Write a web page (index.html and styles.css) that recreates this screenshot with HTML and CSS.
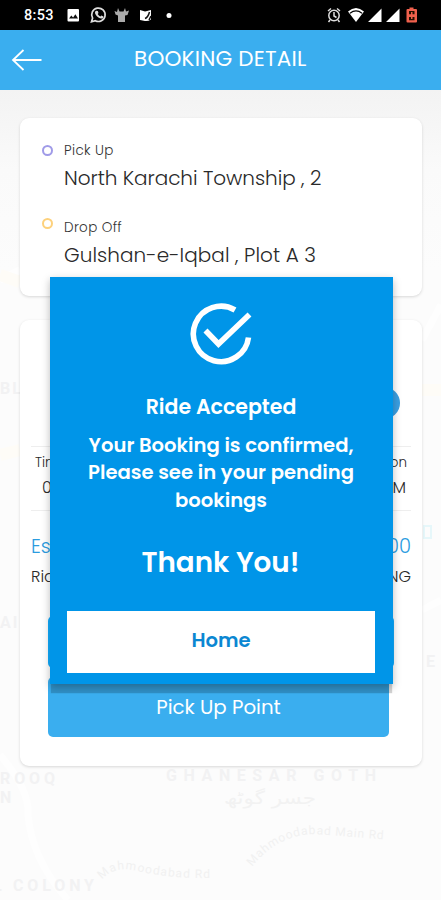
FILE: index.html
```html
<!DOCTYPE html>
<html lang="en">
<head>
<meta charset="utf-8">
<title>Booking Detail</title>
<link rel="stylesheet" href="styles.css">
</head>
<body>
<div class="screen">
  <div class="statusbar">
    <span class="clock">8:53</span>
    <svg class="status-icons" width="150" height="30" viewBox="0 0 150 30" aria-hidden="true">
      <path fill="#fff" d="M3.500 9h9.500a1 1 0 0 1 1 1v10.500a1 1 0 0 1-1 1H3.500a1 1 0 0 1-1-1V10a1 1 0 0 1 1-1z"/>
      <path fill="#111" d="M4 18.500l2.300-3 1.800 2 2.300-3.200 2.600 4.200z"/>
      <path fill="none" stroke="#ddd" stroke-width="1.700" d="M26.500 21.800l1.100-3.700a6.700 6.700 0 1 1 2.700 2.600z"/>
      <path fill="#ddd" d="M31.300 10.800l1.500.2.700 2-.8 1c.7 1.300 1.500 2 2.700 2.500l1-1 2 1c.1 1.500-1 2.200-2.200 2.100-3.200-.5-6.200-3.700-6.200-6 0-.8.500-1.500 1.300-1.800z"/>
      <path fill="#aaa" d="M49.500 11l2.500 1 1-4 1.500 3.500h4L60 8l1 3.500 3-1-1.500 4.500-2.500.5V22h-7v-6.500l-2.500-1z"/>
      <path fill="#fff" d="M75 10l5 1.500 6-1.500v9.500q-3 2-6 1.500l-5-1z"/>
      <path stroke="#111" stroke-width="1.500" fill="none" d="M80 18.500q3-1 4.500-6.500M84 20l2-4"/>
      <circle cx="104" cy="15.500" r="2.500" fill="#fff"/>
    </svg>
    <svg class="system-icons" width="96" height="30" viewBox="0 0 96 30" aria-hidden="true">
      <g fill="none" stroke="#ddd" stroke-width="1.500">
        <circle cx="9" cy="15.500" r="5.200"/>
        <path d="M9 12v4l2.500 1.500M3 11l3-2.500M15 11l-3-2.500M5 20l-1.500 2M13 20l1.500 2"/>
      </g>
      <path fill="#fff" d="M23 11.500q8-7 16 0L31 22z"/>
      <path fill="none" stroke="#000" stroke-width="1.200" d="M25 13.200q6-4.500 12 0"/>
      <path fill="#fff" d="M56.500 8.500V22H43zM74.500 8.500V22H61z"/>
      <path fill="#ef604d" d="M84.500 7.500h4V9H91q1 0 1 1v11.500q0 1-1 1h-8.500q-1 0-1-1V10q0-1 1-1h2z"/>
      <path fill="#210" d="M84 11h5.500v3.200H84zM84 17h5.500v3.200H84z"/>
      <path fill="#ef604d" d="M86 12h1.500v7H86z"/>
    </svg>
  </div>
  <div class="appbar">
    <svg class="back" width="32" height="24" viewBox="0 0 32 24" aria-hidden="true"><path d="M12.500 2L2 12l10.500 10M2 12h28.500"/></svg>
    <h1 class="title">BOOKING DETAIL</h1>
  </div>
  <div class="content">
    <svg class="map" width="441" height="810" viewBox="0 0 441 810" aria-hidden="true">
      <defs>
        <path id="road-a" d="M102 790q12-15 35-9 34 8 78 7"/>
        <path id="road-b" d="M252 777q25-32 62-33 40 3 77 6"/>
      </defs>
      <g class="roads">
        <path d="M0 190l20-10M422 250l19-35M0 665q30 35 28 60 4 45 40 85M422 520l19-10"/>
        <path class="highway" d="M0 185l20 7M0 365l20-5M422 300h19"/>
      </g>
      <g class="places">
        <text x="0" y="304">BL</text>
        <text x="0" y="538">AI</text>
        <text x="0" y="694" textLength="57">ROOQ</text>
        <text x="0" y="713">N</text>
        <text x="166" y="691" textLength="212">GHANESAR GOTH</text>
        <text x="-7" y="801">L</text>
        <text x="13" y="801" textLength="83">COLONY</text>
        <text x="426" y="577">E</text>
      </g>
      <text class="arabic" x="270" y="714" text-anchor="middle" textLength="92" lengthAdjust="spacingAndGlyphs">جسر گوٹھ</text>
      <text class="road"><textPath href="#road-a" textLength="112">Mahmoodabad Rd</textPath></text>
      <text class="road"><textPath href="#road-b" textLength="142">Mahmoodabad Main Rd</textPath></text>
      <rect x="424" y="436" width="7" height="12" fill="none" stroke="#e6f7fa" stroke-width="2"/>
    </svg>
    <section class="card places-card">
      <div class="stop">
        <i class="dot dot-pick"></i>
        <div><div class="label">Pick Up</div><div class="address pick">North Karachi Township , 2</div></div>
      </div>
      <div class="stop">
        <i class="dot dot-drop"></i>
        <div><div class="label drop-label">Drop Off</div><div class="address drop">Gulshan-e-Iqbal , Plot A 3</div></div>
      </div>
    </section>
    <section class="card ride-card">
      <div class="driver"><i class="call"></i></div>
      <div class="times">
        <div class="row small"><span>Time</span><span>Duration</span></div>
        <div class="row hours"><span>01:53</span><span>12:00 AM</span></div>
      </div>
      <div class="row fare"><span>Estimated</span><span>PKR 500</span></div>
      <div class="row status"><span>Ride Status</span><span>PENDING</span></div>
      <div class="button hidden-button"></div>
      <div class="button point"><span>Pick Up Point</span></div>
    </section>
  </div>
  <div class="dialog" role="dialog">
    <svg class="check" width="64" height="64" viewBox="0 0 64 64" aria-hidden="true">
      <path d="M46 8A27.700 27.700 0 1 0 59.500 35.500"/>
      <path d="M16.500 28.500L29.500 42 60.500 12.500"/>
    </svg>
    <div class="accepted"><span>Ride Accepted</span></div>
    <div class="message"><span class="m1">Your Booking is confirmed,</span><span class="m2">Please see in your pending</span><span class="m3">bookings</span></div>
    <div class="thanks"><span>Thank You!</span></div>
    <div class="home"><span>Home</span></div>
  </div>
</div>
</body>
</html>
```
FILE: styles.css
```css
* { box-sizing: border-box; }
body { margin: 0; font-family: Poppins, Inter, "Liberation Sans", sans-serif; }
.screen { position: relative; width: 441px; height: 900px; overflow: hidden; display: flex; flex-direction: column; background: #fcfcfc; }
.statusbar { height: 30px; flex: none; display: flex; background: #000; color: #fff; }
.clock { width: 65px; padding-left: 24px; font: 500 14.5px/32px Roboto, sans-serif; letter-spacing: .3px; white-space: nowrap; }
.system-icons { margin-left: auto; margin-right: 20px; }
.appbar { height: 60px; flex: none; display: flex; align-items: center; padding: 0 0 0 11px; background: #3aaeef; color: #fff; }
.back { fill: none; stroke: #fff; stroke-width: 1.8; }
.title { margin: -3px 0 0 91px; font-size: 21.5px; font-weight: 400; line-height: 30px; letter-spacing: .2px; white-space: nowrap; }
.content { position: relative; flex: 1; padding: 28px 19px 0 20px; background: linear-gradient(#f3f3f3, #fafafa 80px, #fcfcfc 180px); }
.map { position: absolute; left: 0; top: 0; }
.roads path { fill: none; stroke: #fefefe; stroke-width: 7; }
.roads .highway { stroke: #fefcf7; stroke-width: 12; }
.places { font: 700 16px Roboto, sans-serif; letter-spacing: 2px; fill: #f2f2f3; }
.arabic { font: 18px "DejaVu Sans", sans-serif; fill: #f2f2f2; }
.road { font: 12px Roboto, sans-serif; fill: #f1f1f1; }
.card { position: relative; border-radius: 9px; background: #fff; box-shadow: 0 1px 3px rgba(0,0,0,.15); }
.places-card { height: 178px; padding: 22px 22px 0; }
.stop { display: flex; height: 77px; gap: 11px; }
.dot { flex: none; width: 11px; height: 11px; margin-top: 5px; border: 2px solid #a09be8; border-radius: 50%; }
.dot-drop { border-color: #fdd17c; margin-top: 1px; }
.label { height: 21px; font-size: 13.5px; line-height: 21px; font-weight: 300; letter-spacing: .35px; color: #333; white-space: nowrap; }
.address { font-size: 20px; line-height: 34px; font-weight: 300; color: #2a2a2a; white-space: nowrap; }
.pick { letter-spacing: -.05px; }
.drop { letter-spacing: .05px; }
.ride-card { height: 446px; margin-top: 24px; padding: 0 11px; }
.driver { height: 126px; display: flex; justify-content: flex-end; padding: 67px 11px 0 0; }
.call { width: 32px; height: 32px; border-radius: 50%; background: #3a9fe2; }
.row { display: flex; justify-content: space-between; white-space: nowrap; font-weight: 300; color: #2a2a2a; }
.times { height: 65px; border: solid #eee; border-width: 1px 0; }
.small { height: 31px; padding: 0 4px; font-size: 13.5px; line-height: 31px; }
.hours { padding: 0 5px 0 11px; font-size: 16px; line-height: 20px; }
.fare { height: 52px; padding-top: 20px; font-size: 19.5px; line-height: 32px; color: #2b9cdf; }
.status { height: 53px; font-size: 16px; line-height: 28px; }
.button { border-radius: 5px; background: #3aaeef; }
.hidden-button { width: 346px; height: 52px; margin-left: 17px; background: #10acff; }
.point { width: 341px; height: 60px; margin: 9px 0 0 17px; color: #fff; font-size: 19.8px; line-height: 61px; text-align: center; }
.dialog { position: absolute; left: 50px; top: 277px; width: 343px; height: 407px; padding-top: 25px; display: flex; flex-direction: column; align-items: center; color: #fff; background: #0095e8; box-shadow: 0 3px 8px rgba(0,0,0,.27), 0 10px 1px -1px rgba(0,0,0,.17); clip-path: inset(-10px -12px -10px -12px); white-space: nowrap; }
.check { flex: none; margin-left: -2px; fill: none; stroke: #fff; stroke-width: 5.6; }
.accepted { margin-top: 25px; font-size: 20.5px; font-weight: 600; line-height: 32px; }
.accepted, .message { position: relative; left: -.5px; }
.message { display: flex; flex-direction: column; align-items: center; margin-top: 8.5px; font-size: 19.6px; font-weight: 600; line-height: 27.500px; }
.thanks { margin: 27.5px 2px 0 0; font-size: 27.8px; font-weight: 600; line-height: 42px; }
.home { width: 308px; height: 62px; margin: 27px 1px 0 0; background: #fff; color: #0b87d2; font-size: 19.6px; font-weight: 600; line-height: 59px; text-align: center; }
```
